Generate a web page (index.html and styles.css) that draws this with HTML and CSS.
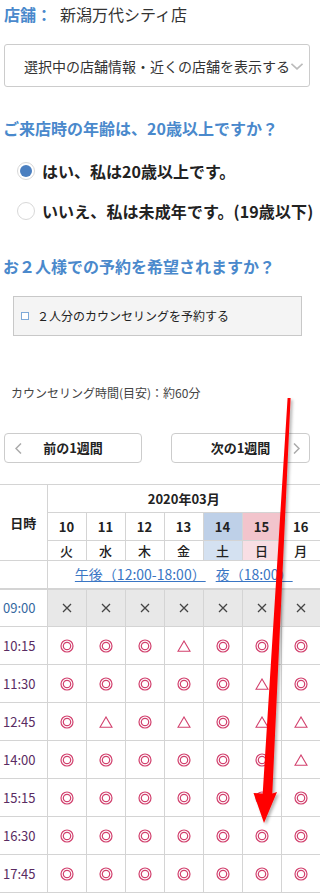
FILE: index.html
```html
<!DOCTYPE html>
<html lang="ja">
<head>
<meta charset="utf-8">
<title>予約</title>
<link rel="stylesheet" href="styles.css">
</head>
<body>
<svg class="defs" width="0" height="0" aria-hidden="true">
  <defs>
    <symbol id="maru" viewBox="0 0 14 14"><circle cx="7" cy="7" r="6" fill="none" stroke="#d2416e" stroke-width="1.2"/><circle cx="7" cy="7" r="3.7" fill="none" stroke="#d2416e" stroke-width="1.2"/></symbol>
    <symbol id="sankaku" viewBox="0 0 14 12"><polygon points="1,11.3 7,1 13,11.3" fill="none" stroke="#d2416e" stroke-width="1.1"/></symbol>
    <symbol id="batsu" viewBox="0 0 12 12"><path d="M2 2 L10 10 M10 2 L2 10" stroke="#444" stroke-width="1.3" fill="none"/></symbol>
  </defs>
</svg>

<div class="store"><span class="store-label">店舗：</span>新潟万代シティ店</div>

<div class="select">
  <span>選択中の店舗情報・近くの店舗を表示する</span>
  <svg class="select-chev" width="12" height="7" viewBox="0 0 12 7"><polyline points="0.5,0.8 6,5.8 11.5,0.8" fill="none" stroke="#bbb" stroke-width="1.6"/></svg>
</div>

<h2 class="q q1">ご来店時の年齢は、20歳以上ですか？</h2>
<div class="radios">
  <label class="radio-row"><span class="radio on"></span><span class="rtxt">はい、私は20歳以上です。</span></label>
  <label class="radio-row"><span class="radio"></span><span class="rtxt rtxt2">いいえ、私は未成年です。(19歳以下)</span></label>
</div>

<h2 class="q q2">お２人様での予約を希望されますか？</h2>
<div class="pair">
  <span class="check"></span>
  <span>２人分のカウンセリングを予約する</span>
</div>

<p class="duration">カウンセリング時間(目安)：約60分</p>

<div class="nav">
  <div class="navbtn">
    <svg class="chev-l" width="7" height="11" viewBox="0 0 7 11"><polyline points="6,0.5 1,5.5 6,10.5" fill="none" stroke="#aaa" stroke-width="1.5"/></svg>
    <span class="navtxt">前の1週間</span>
    <span></span>
  </div>
  <div class="navbtn">
    <span></span>
    <span class="navtxt">次の1週間</span>
    <svg class="chev-r" width="7" height="11" viewBox="0 0 7 11"><polyline points="1,0.5 6,5.5 1,10.5" fill="none" stroke="#aaa" stroke-width="1.5"/></svg>
  </div>
</div>

<table class="cal">
  <colgroup><col class="c-time"><col class="c-day"><col class="c-day"><col class="c-day"><col class="c-day"><col class="c-day"><col class="c-day"><col class="c-day"></colgroup>
  <thead>
    <tr class="r-month"><th rowspan="3" class="h-time">日時</th><th colspan="7" class="last">2020年03月</th></tr>
    <tr class="r-date"><th>10</th><th>11</th><th>12</th><th>13</th><th class="sat">14</th><th class="sun">15</th><th class="last">16</th></tr>
    <tr class="r-dow"><th>火</th><th>水</th><th>木</th><th>金</th><th class="sat2">土</th><th class="sun2">日</th><th class="last">月</th></tr>
    <tr class="r-link"><td class="blank"></td><td colspan="7" class="last"><a href="#" class="lnk">午後（12:00-18:00）</a><a href="#" class="lnk lnk2">夜（18:00）</a></td></tr>
  </thead>
  <tbody>
    <tr class="r-first"><th class="t t-blue">09:00</th><td class="g"><svg class="bx"><use href="#batsu"/></svg></td><td class="g"><svg class="bx"><use href="#batsu"/></svg></td><td class="g"><svg class="bx"><use href="#batsu"/></svg></td><td class="g"><svg class="bx"><use href="#batsu"/></svg></td><td class="g"><svg class="bx"><use href="#batsu"/></svg></td><td class="g"><svg class="bx"><use href="#batsu"/></svg></td><td class="g last"><svg class="bx"><use href="#batsu"/></svg></td></tr>
    <tr><th class="t">10:15</th><td><svg class="mr"><use href="#maru"/></svg></td><td><svg class="mr"><use href="#maru"/></svg></td><td><svg class="mr"><use href="#maru"/></svg></td><td><svg class="sk"><use href="#sankaku"/></svg></td><td><svg class="mr"><use href="#maru"/></svg></td><td><svg class="mr"><use href="#maru"/></svg></td><td class="last"><svg class="mr"><use href="#maru"/></svg></td></tr>
    <tr><th class="t">11:30</th><td><svg class="mr"><use href="#maru"/></svg></td><td><svg class="mr"><use href="#maru"/></svg></td><td><svg class="mr"><use href="#maru"/></svg></td><td><svg class="mr"><use href="#maru"/></svg></td><td><svg class="mr"><use href="#maru"/></svg></td><td><svg class="sk"><use href="#sankaku"/></svg></td><td class="last"><svg class="mr"><use href="#maru"/></svg></td></tr>
    <tr><th class="t">12:45</th><td><svg class="mr"><use href="#maru"/></svg></td><td><svg class="sk"><use href="#sankaku"/></svg></td><td><svg class="mr"><use href="#maru"/></svg></td><td><svg class="sk"><use href="#sankaku"/></svg></td><td><svg class="mr"><use href="#maru"/></svg></td><td><svg class="sk"><use href="#sankaku"/></svg></td><td class="last"><svg class="sk"><use href="#sankaku"/></svg></td></tr>
    <tr><th class="t">14:00</th><td><svg class="mr"><use href="#maru"/></svg></td><td><svg class="mr"><use href="#maru"/></svg></td><td><svg class="mr"><use href="#maru"/></svg></td><td><svg class="mr"><use href="#maru"/></svg></td><td><svg class="mr"><use href="#maru"/></svg></td><td><svg class="mr"><use href="#maru"/></svg></td><td class="last"><svg class="sk"><use href="#sankaku"/></svg></td></tr>
    <tr><th class="t">15:15</th><td><svg class="mr"><use href="#maru"/></svg></td><td><svg class="mr"><use href="#maru"/></svg></td><td><svg class="mr"><use href="#maru"/></svg></td><td><svg class="mr"><use href="#maru"/></svg></td><td><svg class="mr"><use href="#maru"/></svg></td><td><svg class="mr"><use href="#maru"/></svg></td><td class="last"><svg class="mr"><use href="#maru"/></svg></td></tr>
    <tr><th class="t">16:30</th><td><svg class="mr"><use href="#maru"/></svg></td><td><svg class="mr"><use href="#maru"/></svg></td><td><svg class="mr"><use href="#maru"/></svg></td><td><svg class="mr"><use href="#maru"/></svg></td><td><svg class="mr"><use href="#maru"/></svg></td><td><svg class="mr"><use href="#maru"/></svg></td><td class="last"><svg class="mr"><use href="#maru"/></svg></td></tr>
    <tr><th class="t">17:45</th><td><svg class="mr"><use href="#maru"/></svg></td><td><svg class="mr"><use href="#maru"/></svg></td><td><svg class="mr"><use href="#maru"/></svg></td><td><svg class="mr"><use href="#maru"/></svg></td><td><svg class="mr"><use href="#maru"/></svg></td><td><svg class="mr"><use href="#maru"/></svg></td><td class="last"><svg class="mr"><use href="#maru"/></svg></td></tr>
  </tbody>
</table>

<svg class="arrow" width="320" height="896" viewBox="0 0 320 896" aria-hidden="true">
  <defs>
    <filter id="sh" x="-20%" y="-5%" width="160%" height="115%">
      <feDropShadow dx="2" dy="2" stdDeviation="1.8" flood-color="#000" flood-opacity="0.3"/>
    </filter>
  </defs>
  <polygon points="287.6,398 290.6,398 272.3,793.5 277,792 264,823 253.5,793 262.7,793.5" fill="#ff0000" filter="url(#sh)"/>
</svg>
</body>
</html>
```
FILE: styles.css
```css
* { box-sizing: border-box; margin: 0; padding: 0; }
html, body { background: #fff; }
body {
  width: 320px;
  position: relative;
  font-family: "Noto Sans CJK JP", "Noto Sans", sans-serif;
  color: #333;
}
.defs { position: absolute; width: 0; height: 0; }

.store {
  height: 44px;
  padding: 4px 0 0 4px;
  font-size: 16px;
  line-height: 20px;
}
.store-label { color: #4a89cc; font-weight: bold; margin-right: 8px; }

.select {
  margin-left: 4px;
  width: 306px;
  height: 43px;
  border: 1px solid #ccc;
  border-radius: 3px;
  display: flex;
  align-items: center;
  padding-left: 19px;
  font-size: 14px;
  line-height: 18px;
}
.select-chev { margin-left: 1px; margin-top: 1px; }

.q {
  color: #4a89cc;
  font-weight: bold;
  font-size: 16px;
  line-height: 20px;
  padding-left: 3px;
}
.q1 { margin-top: 31px; }
.radios { margin-top: 13px; }
.radio-row {
  height: 40px;
  display: flex;
  align-items: center;
  padding-left: 17px;
  gap: 7px;
  font-size: 16px;
  font-weight: bold;
  line-height: 20px;
  color: #222;
  white-space: nowrap;
}
.rtxt2 { letter-spacing: 0.1px; }
.radio {
  position: relative;
  width: 18px;
  height: 18px;
  border-radius: 50%;
  border: 1px solid #d8d8d8;
  background: #fff;
  flex: none;
}
.radio.on::after {
  content: "";
  position: absolute;
  left: 2px;
  top: 2px;
  width: 12px;
  height: 12px;
  border-radius: 50%;
  background: #4a7fc0;
}
.q2 { margin-top: 25px; }

.pair {
  margin: 20px 0 0 13px;
  width: 289px;
  height: 40px;
  background: #f4f4f4;
  border: 1px solid #c8c8c8;
  display: flex;
  align-items: center;
  padding-left: 7px;
  gap: 8px;
  font-size: 12px;
  line-height: 16px;
  color: #222;
}
.check {
  width: 8px;
  height: 8px;
  border: 1px solid #7ea9d8;
  background: #fff;
  flex: none;
}

.duration {
  margin: 49px 0 0 11px;
  font-size: 12px;
  line-height: 16px;
  color: #444;
}

.nav {
  margin: 32px 0 0 4px;
  width: 306px;
  display: flex;
  justify-content: space-between;
}
.navbtn {
  width: 138px;
  height: 30px;
  border: 1px solid #ccc;
  border-radius: 4px;
  display: grid;
  grid-template-columns: 1fr auto 1fr;
  align-items: center;
  font-size: 13px;
  font-weight: bold;
  line-height: 16px;
  color: #222;
}
.navbtn + .navbtn { width: 139px; }
.chev-l { margin-left: 10px; }
.chev-r { justify-self: end; margin-right: 9px; }

.cal {
  margin-top: 21px;
  width: 320px;
  table-layout: fixed;
  border-collapse: collapse;
  font-size: 13px;
  line-height: 16px;
}
.c-time { width: 47px; }
.c-day { width: 39px; }
.cal th, .cal td {
  border: 1px solid #d4d4d4;
  text-align: center;
  vertical-align: middle;
  padding: 0;
}
.cal .h-time, .cal .t, .cal .blank { border-left: none; }
.cal .last { border-right: none; }
.cal thead th { font-weight: bold; color: #222; }
.r-month th { height: 28px; }
.r-date th { height: 28px; }
.r-dow th { height: 20px; }
.cal .r-dow th { font-weight: 500; }
.r-link td { height: 28px; }
.cal .sat { background: #bed0e8; }
.cal .sun { background: #f2c4cc; }
.cal .sat2 { background: #d4e1f1; }
.cal .sun2 { background: #f8dee4; }
.lnk {
  color: #3a76c4;
  text-decoration: underline;
  font-size: 14px;
}
.lnk2 { margin-left: 10px; }

.cal tbody tr { height: 38px; }
.r-first th, .r-first td { border-top: 2px solid #d4d4d4; }
.cal .t {
  text-align: left;
  padding-left: 3px;
  font-weight: normal;
  color: #5a2b62;
}
.cal .t-blue { color: #33689f; }
.cal td.g { background: #e8e8e8; }
.mr { width: 14px; height: 14px; display: block; margin: 0 auto; }
.sk { width: 14px; height: 12px; display: block; margin: 0 auto; }
.bx { width: 12px; height: 12px; display: block; margin: 0 auto; }

.arrow {
  position: absolute;
  left: 0;
  top: 0;
  pointer-events: none;
}
```
